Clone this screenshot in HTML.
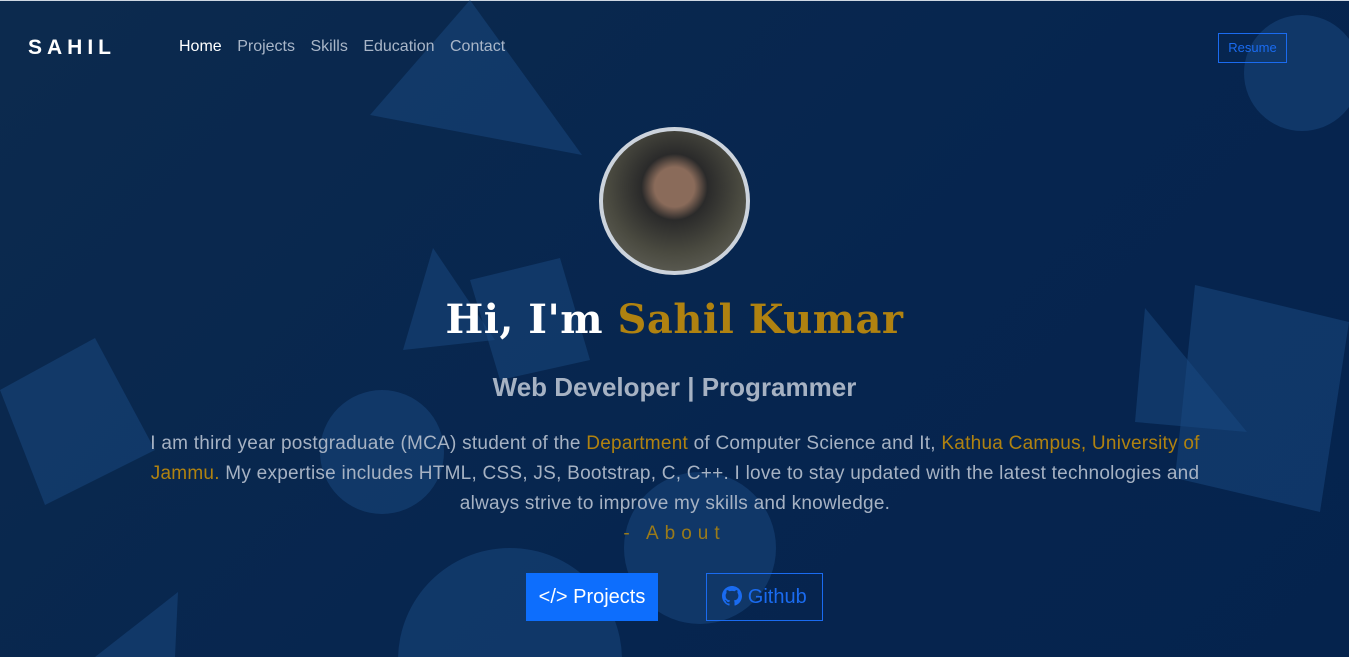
<!DOCTYPE html>
<html><head><meta charset="utf-8"><style>
*{margin:0;padding:0;box-sizing:border-box}
html,body{width:1349px;height:657px;overflow:hidden}
body{background:linear-gradient(135deg,#0c2a4e,#06254f 60%,#05234d);font-family:"Liberation Sans",sans-serif;position:relative}
.top{position:absolute;left:0;top:0;width:100%;height:1px;background:#cfd8e3}
svg.bg{position:absolute;left:0;top:0}
.logo{position:absolute;left:28px;top:36px;color:#fff;font-weight:bold;font-size:21px;letter-spacing:5px}
.nav{position:absolute;left:179px;top:38px;font-size:16px;color:#a9b6c8}
.nav span{margin-right:15.5px}
.nav span:first-child{color:#fff}
.resume{position:absolute;left:1218px;top:33px;width:69px;height:30px;border:1px solid #1a6bf0;color:#1a6bf0;font-size:13px;text-align:center;line-height:28px}
.avatar{position:absolute;left:599px;top:127px;width:151px;height:148px;border-radius:50%;border:4px solid #ccd3dc;background:radial-gradient(circle at 50% 40%,#8a6b5a 0 18%,#2a2a2a 30%,#4a4a40 60%,#6c6c64);overflow:hidden}
h1{position:absolute;top:296px;width:100%;text-align:center;font-family:"DejaVu Serif",serif;font-weight:900;font-size:40px;color:#fff;left:0;letter-spacing:0.5px}
h1 b{color:#b08210}
h2{position:absolute;top:372px;width:100%;text-align:center;font-size:26px;color:#a6b2c3;font-weight:bold;left:0}
p{position:absolute;top:429px;left:130px;width:1090px;text-align:center;font-size:19px;letter-spacing:0.25px;line-height:30px;color:#a6b2c3}
p i{font-style:normal;color:#b08210}
.about{position:absolute;top:523px;width:100%;text-align:center;left:0;color:#9a7a1a;font-size:19px;letter-spacing:6px}
.b1{position:absolute;left:526px;top:573px;width:132px;height:48px;background:#0d6efd;color:#fff;font-size:20px;text-align:center;line-height:48px}
.b2{position:absolute;left:706px;top:573px;width:117px;height:48px;border:1px solid #1a6bf0;color:#1a6bf0;font-size:20px;text-align:center;line-height:46px}
</style></head><body>
<div class="top"></div>
<svg class="bg" width="1349" height="657">
<g fill="#1a4a82" fill-opacity="0.5">
<polygon points="370,115 470,0 582,155"/>
<circle cx="1302" cy="73" r="58"/>
<polygon points="403,350 433,248 495,340"/>
<polygon points="470,280 560,258 590,360 500,380"/>
<polygon points="0,390 95,338 155,450 45,505"/>
<circle cx="382" cy="452" r="62"/>
<circle cx="510" cy="660" r="112"/>
<circle cx="700" cy="548" r="76"/>
<polygon points="1195,285 1349,322 1320,512 1175,478"/>
<polygon points="1145,308 1247,432 1135,422"/>
<polygon points="95,657 178,592 175,657"/>
</g></svg>
<div class="logo">SAHIL</div>
<div class="nav"><span>Home</span><span>Projects</span><span>Skills</span><span>Education</span><span>Contact</span></div>
<div class="resume">Resume</div>
<div class="avatar"></div>
<h1>Hi, I'm <b>Sahil Kumar</b></h1>
<h2>Web Developer | Programmer</h2>
<p>I am third year postgraduate (MCA) student of the <i>Department</i> of Computer Science and It, <i>Kathua Campus, University of Jammu.</i> My expertise includes HTML, CSS, JS, Bootstrap, C, C++. I love to stay updated with the latest technologies and always strive to improve my skills and knowledge.</p>
<div class="about">- About</div>
<div class="b1">&lt;/&gt; Projects</div>
<div class="b2"><svg width="20" height="20" viewBox="0 0 16 16" style="vertical-align:-3px"><path fill="#1a6bf0" d="M8 0C3.58 0 0 3.58 0 8c0 3.540 2.29 6.53 5.47 7.59.4.07.55-.17.55-.38v-1.33c-2.23.48-2.7-1.07-2.7-1.07-.36-.93-.89-1.17-.89-1.170-.73-.5.05-.49.05-.49.8.06 1.23.83 1.23.83.72 1.22 1.87.87 2.33.66.07-.52.28-.87.5-1.07-1.78-.2-3.64-.89-3.64-3.95 0-.87.31-1.59.82-2.15-.08-.2-.36-1.02.08-2.12 0 0 .67-.21 2.2.82a7.6 7.6 0 014 0c1.53-1.04 2.2-.82 2.2-.82.44 1.1.16 1.92.08 2.12.51.56.82 1.27.82 2.15 0 3.07-1.87 3.75-3.65 3.95.29.25.54.73.54 1.48v2.2c0 .21.15.46.55.38A8 8 0 0016 8c0-4.42-3.58-8-8-8z"/></svg> Github</div>
</body></html>
